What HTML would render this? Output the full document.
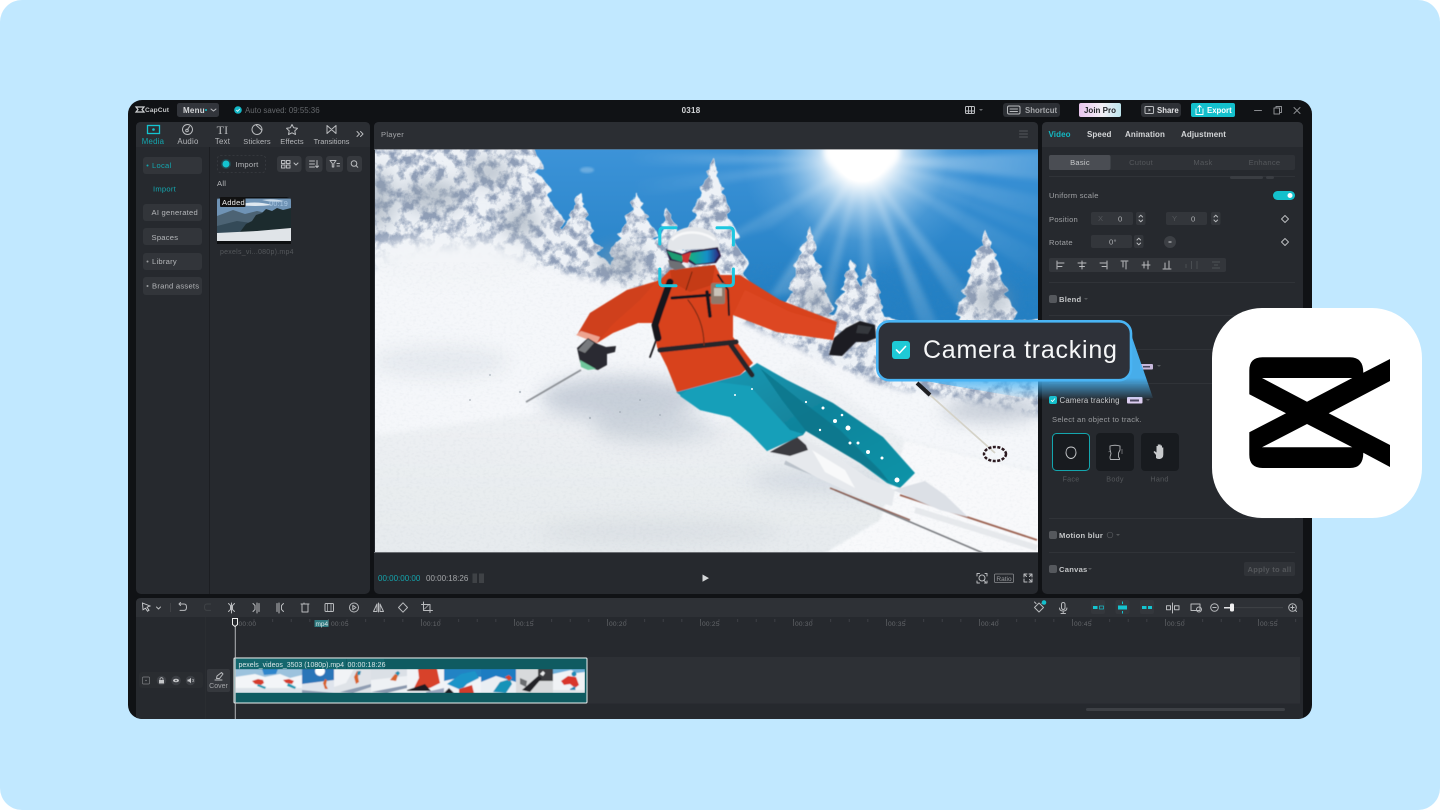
<!DOCTYPE html>
<html lang="en"><head><meta charset="utf-8"><title>CapCut Camera tracking</title>
<style>
html,body{margin:0;padding:0;background:#fff;width:1440px;height:810px;overflow:hidden}
svg{display:block}
text{font-family:"Liberation Sans",sans-serif;font-size:7.6px;fill:#b5b7ba;letter-spacing:.25px}
.b{font-weight:700;fill:#d5d7d9}
.g{fill:#6b6e72}
.d{fill:#54575b}
.c{fill:#14a6ae}
.m{text-anchor:middle}
.r{font-size:6.6px;fill:#64676b}
.i{fill:none;stroke:#b9bbbe;stroke-width:1;stroke-linecap:round;stroke-linejoin:round}
.in{fill:none;stroke:#14c4d0;stroke-width:1.3}
</style></head><body>
<svg width="1440" height="810" viewBox="0 0 1440 810" xmlns="http://www.w3.org/2000/svg">
<defs>
<clipPath id="vid"><rect x="375" y="149.500" width="663" height="402.500"/></clipPath>
<clipPath id="win"><rect x="128" y="100" width="1184" height="619" rx="14"/></clipPath>
<clipPath id="thumb"><path d="M217 244V201q0-4 4-4h66q4 0 4 4v43z"/></clipPath>
<clipPath id="clip"><rect x="235" y="669" width="350" height="24"/></clipPath>
<linearGradient id="sky" x1="0" y1="0" x2="0" y2="1"><stop offset="0" stop-color="#3c93d8"/><stop offset=".35" stop-color="#2480c4"/><stop offset="1" stop-color="#1d76ba"/></linearGradient>
<radialGradient id="sun" cx="862" cy="155" r="120" gradientUnits="userSpaceOnUse"><stop offset="0" stop-color="#fff"/><stop offset=".22" stop-color="#fff"/><stop offset=".42" stop-color="#e6f2fb" stop-opacity=".62"/><stop offset=".72" stop-color="#b8daf2" stop-opacity=".16"/><stop offset="1" stop-color="#9ccbec" stop-opacity="0"/></radialGradient>
<radialGradient id="raym" cx="862" cy="158" r="235" gradientUnits="userSpaceOnUse"><stop offset="0" stop-color="#fff"/><stop offset=".55" stop-color="#999"/><stop offset="1" stop-color="#000"/></radialGradient>
<mask id="rm" maskUnits="userSpaceOnUse" x="375" y="149" width="663" height="403"><rect x="375" y="149" width="663" height="403" fill="url(#raym)"/></mask>
<linearGradient id="fg" x1="0" y1="0" x2="0" y2="1"><stop offset="0" stop-color="#f2f4f7"/><stop offset=".55" stop-color="#e9edf0"/><stop offset="1" stop-color="#e5e9ec"/></linearGradient>
<linearGradient id="fan" gradientUnits="userSpaceOnUse" x1="0" y1="378" x2="0" y2="400"><stop offset="0" stop-color="#49b4f4" stop-opacity=".95"/><stop offset="1" stop-color="#49b4f4" stop-opacity="0"/></linearGradient>
<linearGradient id="pro" x1="0" y1="0" x2="1" y2="0"><stop offset="0" stop-color="#e9c6ee"/><stop offset=".55" stop-color="#f2eef5"/><stop offset="1" stop-color="#bfe6ee"/></linearGradient>
<linearGradient id="pant" x1="0" y1="0" x2="1" y2="1"><stop offset="0" stop-color="#1b9db8"/><stop offset=".5" stop-color="#11849c"/><stop offset="1" stop-color="#0f94a8"/></linearGradient>
<linearGradient id="lens" x1="0" y1="0" x2="1" y2="0"><stop offset="0" stop-color="#18b07c"/><stop offset=".6" stop-color="#1590c8"/><stop offset="1" stop-color="#2c2a80"/></linearGradient>
<filter id="tree" filterUnits="userSpaceOnUse" x="320" y="120" width="760" height="330" color-interpolation-filters="sRGB">
<feTurbulence type="fractalNoise" baseFrequency=".06" numOctaves="3" seed="4" result="n"/>
<feDisplacementMap in="SourceGraphic" in2="n" scale="9" xChannelSelector="R" yChannelSelector="G" result="d0"/>
<feGaussianBlur in="d0" stdDeviation=".6" result="d"/>
<feTurbulence type="fractalNoise" baseFrequency=".09" numOctaves="4" seed="9" result="n2"/>
<feColorMatrix in="n2" type="matrix" values="0 0 0 0 .56 0 0 0 0 .62 0 0 0 0 .72 3.6 0 0 0 -1.5" result="s"/>
<feComposite in="s" in2="d" operator="in" result="sh"/>
<feMerge><feMergeNode in="d"/><feMergeNode in="sh"/></feMerge>
</filter>
<filter id="grain" filterUnits="userSpaceOnUse" x="375" y="149" width="663" height="403" color-interpolation-filters="sRGB">
<feTurbulence type="fractalNoise" baseFrequency=".3 .45" numOctaves="2" seed="3"/>
<feColorMatrix type="matrix" values="0 0 0 0 .55 0 0 0 0 .6 0 0 0 0 .66 1.6 0 0 0 -.74"/>
<feComposite in2="SourceGraphic" operator="in"/>
</filter>
<filter id="b3" x="-20%" y="-20%" width="140%" height="140%"><feGaussianBlur stdDeviation="3"/></filter>
<filter id="b1"><feGaussianBlur stdDeviation="1"/></filter>
<filter id="b05" filterUnits="userSpaceOnUse" x="200" y="190" width="900" height="520"><feGaussianBlur stdDeviation=".5"/></filter>
<filter id="b8" x="-40%" y="-60%" width="180%" height="220%"><feGaussianBlur stdDeviation="9"/></filter>
<path id="t" d="M0 0L6 10L4 13L12 22L9 25L20 38L15 41L28 56L22 59L37 76L31 80L46 100H-46L-31 80L-37 75L-22 59L-28 55L-15 41L-20 37L-9 25L-12 21L-4 13L-6 9Z"/>
<pattern id="tk" patternUnits="userSpaceOnUse" x="235" y="619" width="18.6" height="10"><rect width=".8" height="3" fill="#42454a"/></pattern>
</defs>

<!-- page -->
<rect width="1440" height="810" rx="22" fill="#c1e8ff"/>

<!-- window -->
<rect x="128" y="100" width="1184" height="619" rx="14" fill="#101215"/>
<g clip-path="url(#win)">

<!-- top bar -->
<path d="M136 107h8l-2 2.500 2 2.500h-8l2-2.500z" fill="none" stroke="#d0d2d4" stroke-width="1.200"/>
<text x="145" y="112" style="font-size:6.600px;fill:#c4c6c8;font-weight:700;letter-spacing:.1px">CapCut</text>
<rect x="177" y="103" width="42" height="14" rx="2.500" fill="#32353b"/>
<text x="183" y="113" class="b" style="font-size:8px">Menu</text><circle cx="206" cy="110" r="1" fill="#14c4d0"/><path d="M211 109l2.500 2 2.500-2" class="i" stroke-width=".8"/>
<circle cx="238" cy="110" r="3.800" fill="#14b8c6"/><path d="M236.300 110l1.300 1.300 2.200-2.400" fill="none" stroke="#fff" stroke-width=".8"/>
<text x="245" y="113" style="fill:#65686c;font-size:7.900px;letter-spacing:0">Auto saved: 09:55:36</text>
<text x="691" y="113" class="b m" style="font-size:8px">0318</text>
<rect x="965.500" y="106.500" width="9" height="7" rx="1" class="i"/><path d="M968.500 107v6M971.500 107v6M966 111h8" class="i" stroke-width=".7"/><path d="M979 109l2 2 2-2z" fill="#6b6e72"/>
<rect x="1003" y="103" width="57" height="14" rx="3" fill="#2c2f34"/><rect x="1007.500" y="106" width="12.500" height="8" rx="1.500" class="i"/><path d="M1010 109h7.500M1010 111.500h7.500" class="i" stroke-width=".7"/>
<text x="1025" y="113" class="b" style="fill:#a5a7aa;font-size:7.800px;letter-spacing:0">Shortcut</text>
<rect x="1079" y="103" width="42" height="14" rx="2" fill="url(#pro)"/><text x="1100" y="113" class="b m" style="fill:#26282c;font-size:8px;letter-spacing:0">Join Pro</text>
<rect x="1141" y="103" width="40" height="14" rx="3" fill="#2e3136"/><rect x="1145" y="106.500" width="8.500" height="7" rx="1" class="i"/><path d="M1148.500 108.500v3l2.500-1.500z" fill="#b9bbbe"/>
<text x="1157" y="113" class="b" style="fill:#e2e3e5;font-size:7.800px;letter-spacing:0">Share</text>
<rect x="1191" y="103" width="44" height="14" rx="2" fill="#14c0cc"/><path d="M1196 108.500v6h7v-6M1199.500 112v-6.500M1197.500 107.500l2-2 2 2" fill="none" stroke="#fff" stroke-width=".9"/>
<text x="1207" y="113" class="b" style="fill:#fff;font-size:7.800px;letter-spacing:0">Export</text>
<path d="M1254.500 110.500h7" class="i" style="stroke:#8a8c90"/><rect x="1274" y="108" width="5.500" height="6" class="i" style="stroke:#8a8c90"/><path d="M1276 108v-1.500h5.500v6h-2" class="i" style="stroke:#8a8c90"/><path d="M1294 107.500l6 6M1300 107.500l-6 6" class="i" style="stroke:#8a8c90"/>

<!-- media panel -->
<rect x="136" y="122" width="234" height="472" rx="5" fill="#26292e"/>
<path d="M136 147v-20q0-5 5-5h224q5 0 5 5v20z" fill="#2b2e33"/>
<rect x="209" y="147" width="1" height="447" fill="#1c1e22"/>
<rect x="147.500" y="125.500" width="12" height="8" class="in"/><circle cx="153.500" cy="129.500" r="1.300" fill="#14c4d0"/>
<text x="153" y="144" class="m c" style="font-size:7.800px">Media</text>
<circle cx="187.500" cy="129.500" r="5" class="i"/><path d="M187.500 129.500l2-3" class="i"/><circle cx="187" cy="130.500" r="1.300" class="i"/>
<text x="188" y="144" class="m" style="font-size:7.800px">Audio</text>
<text x="222.500" y="134" class="m" style="font-family:'Liberation Serif',serif;font-size:12px;fill:#b9bbbe">TI</text>
<text x="222.500" y="144" class="m" style="font-size:7.800px">Text</text>
<circle cx="257" cy="129.500" r="5" class="i"/><path d="M256 125l5.500 5" class="i"/>
<text x="257" y="144" class="m" style="font-size:7.500px;letter-spacing:.1px">Stickers</text>
<path d="M292 124.500l1.700 3.300 3.800.5-2.700 2.600.7 3.600-3.500-1.700-3.500 1.700.7-3.600-2.700-2.600 3.800-.5z" class="i"/>
<text x="292" y="144" class="m" style="font-size:7.500px;letter-spacing:.1px">Effects</text>
<path d="M327 125.500v8l9-8v8z" class="i"/>
<text x="331.500" y="144" class="m" style="font-size:7.400px;letter-spacing:0">Transitions</text>
<path d="M357 131.500l2.500 2.500-2.500 2.500M360.500 131.500l2.500 2.500-2.500 2.500" class="i"/>

<rect x="143" y="157" width="59" height="17" rx="3" fill="#32353a"/><circle cx="147.500" cy="165.500" r="1" fill="#14a6ae"/><text x="152" y="168" class="c">Local</text>
<text x="153" y="191.500" class="c">Import</text>
<rect x="143" y="204" width="59" height="17" rx="3" fill="#32353a"/><text x="151.500" y="215">AI generated</text>
<rect x="143" y="228" width="59" height="17" rx="3" fill="#32353a"/><text x="151.500" y="240">Spaces</text>
<rect x="143" y="253" width="59" height="17" rx="3" fill="#32353a"/><circle cx="147.500" cy="261.500" r="1" fill="#9a9c9f"/><text x="152" y="264">Library</text>
<rect x="143" y="277" width="59" height="18" rx="3" fill="#32353a"/><circle cx="147.500" cy="286" r="1" fill="#9a9c9f"/><text x="152" y="288.500">Brand assets</text>

<rect x="217.500" y="155.500" width="48" height="17" rx="3" fill="none" stroke="#3a3d42" stroke-width=".8" stroke-dasharray="2 2"/>
<circle cx="226" cy="164" r="3.500" fill="#14c4d0"/><circle cx="226" cy="164" r="5" fill="#14c4d0" opacity=".2"/>
<text x="235.500" y="167">Import</text>
<rect x="277" y="156" width="24.500" height="16" rx="3" fill="#36393e"/><path d="M281.500 160.500h3.500v3h-3.500zM286.500 160.500h3.500v3h-3.500zM281.500 165h3.500v3h-3.500zM286.500 165h3.500v3h-3.500z" class="i" stroke-width=".8"/><path d="M294 163l2 2 2-2" class="i"/>
<rect x="305.500" y="156" width="17" height="16" rx="3" fill="#36393e"/><path d="M309.500 161h5M309.500 164h5M309.500 167h5M317 160.500v7M315.500 166l1.500 1.500 1.500-1.500" class="i" stroke-width=".8"/>
<rect x="326" y="156" width="17" height="16" rx="3" fill="#36393e"/><path d="M330 160.500h6l-2.200 3v3.500h-1.500v-3.500zM337 163.500h2.500M337 166h2.500" class="i" stroke-width=".8"/>
<rect x="347" y="156" width="15" height="16" rx="3" fill="#36393e"/><circle cx="354" cy="163.500" r="2.800" class="i"/><path d="M356 165.500l1.800 1.800" class="i"/>
<text x="217" y="186">All</text>
<!-- media thumb -->
<g clip-path="url(#thumb)">
<rect x="217" y="197" width="74" height="47" fill="#6f93b5"/>
<path d="M238 205q16-5 34 0-16 2-34 0z" fill="#dfe8f0"/><path d="M262 200q10-2 22 1-10 2-22-1z" fill="#c8d9e8"/>
<path d="M217 216l16-6 12 4 12-3 14 3 20-3v24h-74z" fill="#4c6374"/>
<path d="M217 226l20-5 14 2 16-2 24-3v15h-74z" fill="#344a58"/>
<path d="M240 232l6-8 6-3 4-6 6-2 4-4 6 2 5-3 6 2 8-2v23z" fill="#1c2b2e"/>
<path d="M217 233l40-2 34-3v13h-74z" fill="#e0e4e8"/>
<rect x="217" y="241" width="74" height="3" fill="#0e1012"/>
<rect x="217" y="197" width="74" height="1.500" fill="#0e1012"/>
</g>
<rect x="220" y="197" width="25.500" height="10" rx="1" fill="#111"/>
<text x="222" y="205" style="fill:#f0f0f0;font-size:7.500px">Added</text>
<text x="288" y="206" style="text-anchor:end;fill:#a9c7e2;font-size:7px">00:19</text>
<text x="220" y="254" class="d" style="font-size:7px">pexels_vi...080p).mp4</text>

<!-- player panel -->
<rect x="374" y="122" width="664" height="472" rx="5" fill="#26292e"/>
<path d="M374 149v-22q0-5 5-5h654q5 0 5 5v22z" fill="#2b2e33"/>
<text x="381" y="137" style="fill:#a3a5a8">Player</text>
<path d="M1019.500 131h8M1019.500 134h8M1019.500 137h8" class="i" style="stroke:#55585c"/>
<rect x="374" y="149" width="664" height="1" fill="#5a5d62"/><rect x="374" y="552" width="664" height="1" fill="#6a6d72"/>

<!-- ===== video ===== -->
<g clip-path="url(#vid)">
<rect x="375" y="149" width="663" height="403" fill="url(#sky)"/>
<!-- rays -->
<g mask="url(#rm)"><g fill="#fff" filter="url(#b3)">
<path d="M862 160L1060 200V226z" opacity=".2"/><path d="M862 160L1060 262V292z" opacity=".16"/>
<path d="M862 160L1015 350H985z" opacity=".3"/><path d="M862 160L945 340H925z" opacity=".36"/>
<path d="M862 160L880 330H860z" opacity=".2"/><path d="M862 160L830 310H815z" opacity=".26"/>
<path d="M862 160L790 295H770z" opacity=".3"/><path d="M862 160L720 250H700z" opacity=".22"/>
<path d="M862 160L770 228 745 235z" opacity=".16"/><path d="M862 160L620 200 610 182z" opacity=".18"/>
<path d="M862 160L600 150V166z" opacity=".26"/><path d="M862 160L1060 152V182z" opacity=".38"/>
<path d="M862 160L1060 232 1060 248z" opacity=".1"/><path d="M862 160L760 330H745z" opacity=".12"/>
</g></g>
<rect x="640" y="149" width="398" height="170" fill="url(#sun)"/>
<ellipse cx="862" cy="152" rx="38" ry="22" fill="#fff" filter="url(#b3)"/>
<ellipse cx="587" cy="170" rx="7" ry="3" fill="#fff" opacity=".25" filter="url(#b1)"/>
<!-- trees -->
<g fill="#eef2f7" filter="url(#tree)">
<path d="M330 125H528L541 168 535 172 552 190 546 194 566 222 560 226 576 246 586 262 604 284 640 310 330 320Z"/>
<use href="#t" transform="translate(579,193) scale(.85,1)"/>
<use href="#t" transform="translate(637,193) scale(1,1.1)"/>
<use href="#t" transform="translate(668,207) scale(.7,.9)"/>
<use href="#t" transform="translate(712,158) scale(1,1.4)"/>
<use href="#t" transform="translate(808,226) scale(.72,1.1)"/>
<use href="#t" transform="translate(852,258) scale(.62,.85)"/>
<use href="#t" transform="translate(869,264) scale(.5,.75)"/>
<use href="#t" transform="translate(986,230) scale(.85,1.1)"/>
<path d="M540 275L660 270 780 310V345H540Z"/>
<path d="M780 325L860 310 940 330 980 318 1060 322V420H780Z"/>
</g>
<!-- big tree shadows -->
<g fill="#8f9cab" filter="url(#b8)" opacity=".55">
<ellipse cx="432" cy="196" rx="30" ry="16"/><ellipse cx="378" cy="200" rx="16" ry="30"/><ellipse cx="488" cy="172" rx="22" ry="12"/><ellipse cx="520" cy="222" rx="18" ry="16"/><ellipse cx="620" cy="262" rx="24" ry="14"/>
<ellipse cx="815" cy="300" rx="16" ry="14"/><ellipse cx="990" cy="300" rx="20" ry="14"/>
</g>
<!-- snow -->
<path d="M340 272L470 258 520 262 604 283 700 300 780 340 880 385 1060 420V580H340Z" fill="#f5f7fa" filter="url(#b3)"/>
<ellipse cx="450" cy="262" rx="85" ry="24" fill="#f3f5f8" filter="url(#b8)"/>
<ellipse cx="992" cy="410" rx="50" ry="12" fill="#b2bcc9" filter="url(#b8)" opacity=".7"/>
<path d="M800 360L880 420 905 441 1060 478V580H340V440L560 410 700 440Z" fill="url(#fg)" filter="url(#b3)"/>
<path d="M905 441L1060 478V580H780L880 520Z" fill="#f8f9fb" filter="url(#b1)"/>
<g filter="url(#b8)">
<ellipse cx="620" cy="398" rx="80" ry="22" fill="#bdc6d2" opacity=".8"/>
<ellipse cx="655" cy="428" rx="62" ry="14" fill="#c2cad4" opacity=".7"/>
<ellipse cx="440" cy="362" rx="70" ry="16" fill="#d5dbe3" opacity=".45"/>
<ellipse cx="660" cy="532" rx="120" ry="14" fill="#d9dfe3" opacity=".8"/>
<ellipse cx="820" cy="480" rx="70" ry="14" fill="#c9d0da" opacity=".55"/>
</g>
<rect x="375" y="262" width="663" height="290" fill="#fff" filter="url(#grain)" opacity=".09"/>
<!-- back pole -->
<path d="M930 395L995 453" stroke="#d5d3c9" stroke-width="1.800"/>
<path d="M917 383L930 395" stroke="#1e1e22" stroke-width="4"/>
<ellipse cx="995" cy="454" rx="11" ry="7" fill="none" stroke="#2c1a20" stroke-width="2.500" stroke-dasharray="3 1.500"/>
<g filter="url(#b05)">
<!-- skis -->
<path d="M835 490L983 553" stroke="#7c7e82" stroke-width="1.600"/>
<path d="M900 495L1037 540" stroke="#9c6452" stroke-width="1.800"/>
<path d="M830 488L910 520" stroke="#8d5d50" stroke-width="1.300"/>
<path d="M915 510L1037 548" stroke="#e2e5e9" stroke-width="6" opacity=".8"/>
<path d="M785 462L880 498" stroke="#aab2bd" stroke-width="5" opacity=".7"/>
<!-- boots -->
<path d="M770 452L800 436 812 443 830 452 868 478 895 490 892 506 860 497 818 478Z" fill="#e6e9ed"/>
<path d="M770 452L797 437 806 445 808 450 790 456Z" fill="#3a3b40"/>
<path d="M812 450L845 470 855 488 825 472Z" fill="#f8f9fa"/>
<path d="M893 490L925 481 945 495 968 517 940 510Z" fill="#dce0e6"/>
<!-- pants -->
<path d="M676 392L740 375 757 363 787 380 833 403 883 437 915 473 900 488 887 483 860 463 806 431 803 435 767 451 750 433 730 417 700 410Z" fill="url(#pant)"/>
<path d="M700 380L750 386 790 430 803 434 767 451 750 433 730 417 700 410 680 396Z" fill="#149fb9"/>
<path d="M760 368L800 400 840 430 880 470 890 483 860 463 806 431 782 400Z" fill="#0c7388" opacity=".75"/>
<!-- jacket -->
<path d="M670 270L715 265 720 275 740 275 780 300 837 322 833 340 777 332 733 315 733 337 753 363 740 375 677 392 667 367 657 347 653 323 638 323 613 333 597 343 577 335 590 313 627 290 660 280Z" fill="#d8431f"/>
<path d="M590 313L627 290 655 283 640 300 612 325 597 343 577 335Z" fill="#cf401e"/>
<path d="M733 315L777 332 833 340 836 325 790 312 745 290Z" fill="#dd4721"/>
<path d="M670 270L715 265 712 285 690 292 672 282Z" fill="#c53a18"/>
<path d="M576 335L597 343 600 337 581 331Z" fill="#eda38f"/>
<!-- straps -->
<g fill="none" stroke="#17171b" stroke-linecap="round" stroke-linejoin="round">
<path d="M670 282L660 310 655 325 658 338" stroke-width="7"/>
<path d="M672 298L711 295" stroke-width="3"/>
<path d="M707 292L710 316" stroke-width="3.500"/>
<path d="M718 275L728 290 729 315" stroke-width="2"/>
<path d="M660 350L736 342" stroke-width="5" stroke="#26262a"/>
<path d="M731 345L752 375" stroke-width="5" stroke="#26262a" stroke-dasharray="3 1"/>
<path d="M657 338L650 357" stroke-width="1.800"/>
<path d="M688 300Q704 320 704 345" stroke-width="1.200" stroke="#7d2a12"/>
<path d="M692 272L686 290" stroke-width="1" stroke="#6a2410"/>
</g>
<rect x="711" y="283" width="14" height="21" rx="2" fill="#8f7a6c"/><rect x="714" y="288" width="8" height="8" fill="#c9c3b8"/>
<!-- gloves -->
<path d="M846 328L860 321 875 325 876 338 866 342 856 342 842 356 829 355 834 338Z" fill="#1b1c20"/>
<path d="M858 325L872 327 868 334 856 333Z" fill="#36373c"/>
<path d="M577 348L588 338 598 344 606 347 616 346 615 352 607 354 607 365 598 370 590 368 580 362Z" fill="#2b2c30"/>
<path d="M580 360L596 369 588 370 581 367Z" fill="#6fc79c"/>
<path d="M578 350L588 339 594 343 585 353Z" fill="#8c8e92" opacity=".8"/>
<path d="M581 370L526 402" stroke="#8d9196" stroke-width="1.800"/>
<!-- head -->
<path d="M668 252C666 236 678 227 694 227C710 227 720 237 720 250L700 249 680 250Z" fill="#e3e6ea"/>
<path d="M672 240C680 231 700 229 715 240" fill="none" stroke="#f7f8f9" stroke-width="2.500"/>
<path d="M666 249L682 254 690 251 718 247 721 256 716 263 695 265 685 260 680 265 670 262Z" fill="#2a1c44"/>
<path d="M667 251L683 256 682 262 672 259Z" fill="#1f9c72"/>
<path d="M682 255L691 252 688 263 683 262Z" fill="#cc3030"/>
<path d="M691 253L716 249 719 255 714 262 696 264 689 259Z" fill="url(#lens)"/>
<path d="M668 260L680 262 686 268 675 270 670 267Z" fill="#6e7074"/>
</g>
<!-- specks -->
<g fill="#fff">
<circle cx="823" cy="408" r="1.500"/><circle cx="835" cy="421" r="2"/><circle cx="848" cy="428" r="2.500"/><circle cx="842" cy="415" r="1.300"/><circle cx="858" cy="443" r="1.500"/><circle cx="868" cy="452" r="2"/><circle cx="882" cy="458" r="1.500"/><circle cx="897" cy="480" r="2.500"/><circle cx="820" cy="430" r="1.200"/><circle cx="806" cy="402" r="1.100"/><circle cx="850" cy="443" r="1.500"/><circle cx="752" cy="389" r="1"/><circle cx="735" cy="395" r="1"/>
</g>
<g fill="#9aa3ad" opacity=".6"><circle cx="640" cy="400" r="1"/><circle cx="590" cy="418" r="1.200"/><circle cx="660" cy="415" r="1"/><circle cx="620" cy="412" r="1"/><circle cx="470" cy="400" r="1"/><circle cx="520" cy="392" r="1.200"/><circle cx="490" cy="375" r="1"/></g>
<!-- brackets -->
<g fill="none" stroke="#1cc7e0" stroke-width="3" stroke-linecap="round">
<path d="M676 227.700H663.500Q659.800 227.700 659.800 231.500V244"/>
<path d="M717 227.700H729.500Q733.400 227.700 733.400 231.500V245"/>
<path d="M659.800 269V282Q659.800 285.800 663.500 285.800H676"/>
<path d="M733.400 269V282Q733.400 285.800 729.500 285.800H717"/>
</g>
</g>

<!-- player controls -->
<text x="378" y="581" class="c" style="font-size:8px;letter-spacing:0">00:00:00:00</text>
<text x="426" y="581" style="font-size:8px;fill:#a5a7aa;letter-spacing:0">00:00:18:26</text>
<path d="M472.500 573.500h4.500v9.500h-4.500zM479 573.500h5v9.500h-5z" fill="#3f4246"/>
<path d="M702.500 574.500l6.500 3.600-6.500 3.600z" fill="#d5d7d9"/>
<path d="M977 576v-2.500h2.500M985 573.500h2v2.500M987 581v2h-2.500M979.500 583H977v-2" class="i"/><circle cx="982" cy="578" r="3" class="i"/><path d="M984 580.500l1.500 1.500" class="i"/>
<rect x="994.500" y="574" width="19" height="8.500" rx="1" fill="none" stroke="#8a8c90" stroke-width=".8"/><text x="1004" y="581" class="m" style="font-size:6.500px;fill:#9a9c9f;letter-spacing:0">Ratio</text>
<path d="M1024 577v-3h3M1029 574h3v3M1032 579v3h-3M1027 582h-3v-3M1024.500 574.500l2 2M1031.500 574.500l-2 2M1031.500 581.500l-2-2" class="i"/>

<!-- right panel -->
<rect x="1042" y="122" width="261" height="472" rx="5" fill="#26292e"/>
<path d="M1042 147v-20q0-5 5-5h251q5 0 5 5v20z" fill="#2e3136"/>
<text x="1048.500" y="137" class="b" style="fill:#14b8c2;font-size:8px;letter-spacing:.1px">Video</text>
<text x="1087" y="137" class="b" style="font-size:8px;letter-spacing:.1px">Speed</text>
<text x="1125" y="137" class="b" style="font-size:8px;letter-spacing:.1px">Animation</text>
<text x="1181" y="137" class="b" style="font-size:8px;letter-spacing:.1px">Adjustment</text>
<rect x="1049" y="155" width="246" height="15" rx="2" fill="#2f3237"/>
<rect x="1049" y="155" width="61.500" height="15" rx="2" fill="#4a4d53"/>
<text x="1080" y="165" class="m" style="fill:#c8cacc">Basic</text>
<text x="1141" y="165" class="m d">Cutout</text><text x="1203" y="165" class="m d">Mask</text><text x="1264.500" y="165" class="m d">Enhance</text>
<g fill="#303338"><rect x="1049" y="176" width="246" height="1"/><rect x="1049" y="282" width="246" height="1"/><rect x="1049" y="315" width="246" height="1"/><rect x="1049" y="349" width="246" height="1"/><rect x="1049" y="383" width="246" height="1"/><rect x="1049" y="518" width="246" height="1"/><rect x="1049" y="552" width="246" height="1"/></g>
<rect x="1230" y="176" width="33" height="3" rx="1.500" fill="#3a3d42"/><rect x="1266" y="176" width="8" height="3" rx="1.500" fill="#3a3d42"/>
<text x="1049" y="198" style="fill:#a0a2a5">Uniform scale</text>
<rect x="1273" y="191" width="22" height="9" rx="4.500" fill="#14c0cc"/><circle cx="1290" cy="195.500" r="2.500" fill="#fff"/>
<text x="1049" y="222" style="fill:#a0a2a5">Position</text>
<rect x="1091" y="212" width="42" height="13" rx="2" fill="#33363b"/><text x="1098" y="221" class="d">X</text><text x="1118" y="221.500" style="fill:#b0b2b5">0</text>
<rect x="1136" y="212" width="9.500" height="13" rx="2" fill="#33363b"/><path d="M1139 217l1.800-1.800 1.800 1.800M1139 220l1.800 1.800 1.800-1.800" class="i" stroke-width=".7"/>
<rect x="1166" y="212" width="41" height="13" rx="2" fill="#33363b"/><text x="1172" y="221" class="d">Y</text><text x="1191" y="221.500" style="fill:#b0b2b5">0</text>
<rect x="1211" y="212" width="9.500" height="13" rx="2" fill="#33363b"/><path d="M1214 217l1.800-1.800 1.800 1.800M1214 220l1.800 1.800 1.800-1.800" class="i" stroke-width=".7"/>
<path d="M1285 215.500l3.500 3.500-3.500 3.500-3.500-3.500z" class="i" stroke-width=".8"/>
<text x="1049" y="245" style="fill:#a0a2a5">Rotate</text>
<rect x="1091" y="235" width="41" height="13" rx="2" fill="#33363b"/><text x="1109" y="244.500" style="fill:#b0b2b5">0°</text>
<rect x="1134" y="235" width="9.500" height="13" rx="2" fill="#33363b"/><path d="M1137 240l1.800-1.800 1.800 1.800M1137 243l1.800 1.800 1.800-1.800" class="i" stroke-width=".7"/>
<circle cx="1170" cy="242" r="6" fill="#3c3f44"/><path d="M1168.500 242h3" stroke="#d0d2d4" stroke-width="1"/>
<path d="M1285 238.500l3.500 3.500-3.500 3.500-3.500-3.500z" class="i" stroke-width=".8"/>
<rect x="1049" y="258" width="177" height="14" rx="2" fill="#33363b"/>
<g class="i" stroke-width=".9" fill="none">
<path d="M1057 261v8M1058 263h6M1058 266.500h4"/><path d="M1082 261v8M1078 263h8M1079.500 266.500h5"/><path d="M1107 261v8M1100 263h6M1102 266.500h4"/><path d="M1121 261h7M1123 262v5M1126 262v7"/><path d="M1142 265h8M1144 262v6M1148 261v8"/><path d="M1163 269h8M1165 263v5M1169 261v7"/>
</g>
<path d="M1186 264v4M1191.500 261v8M1197 261v8M1212 262h8M1212 268h8M1214 265h4" fill="none" stroke="#4e5155" stroke-width=".9"/>
<rect x="1049" y="295" width="8" height="8" rx="2" fill="#55585d"/><text x="1059" y="302" class="b" style="fill:#c4c6c8">Blend</text><path d="M1084 298l2 2 2-2z" fill="#54575b"/>
<rect x="1140" y="364" width="13" height="5.500" rx="1" fill="#d9c8ee" opacity=".9"/><rect x="1143" y="366" width="7" height="1.500" fill="#4c4860"/>
<path d="M1157 365l2 2 2-2z" fill="#54575b"/>

<!-- camera tracking section -->
<rect x="1049" y="396" width="8" height="8" rx="2" fill="#14c0cc"/><path d="M1051 400l1.500 1.500 2.500-3" fill="none" stroke="#fff" stroke-width=".8"/>
<text x="1059.500" y="403" style="fill:#c9cbcd;font-size:7.800px;letter-spacing:.2px">Camera tracking</text>
<rect x="1127" y="397" width="15.500" height="6.500" rx="1" fill="#dccdf0"/><rect x="1130" y="399.500" width="9" height="2" fill="#4c4860"/>
<path d="M1146 399l2 2 2-2z" fill="#54575b"/>
<text x="1052" y="422" style="fill:#9a9c9f">Select an object to track.</text>
<rect x="1052.500" y="433.500" width="37" height="37" rx="4" fill="#181b1f" stroke="#14a6ae" stroke-width="1"/>
<path d="M1071 447c-3.500 0-5 2.500-5 5.500 0 3.500 2.500 6 5 6s5-2.500 5-6c0-3-1.500-5.500-5-5.500z" fill="none" stroke="#c8cacc" stroke-width=".9"/>
<rect x="1096" y="433" width="38" height="38" rx="4" fill="#181b1f"/>
<path d="M1110 446q5-1.500 10 0v4l-1.500 3v4q1.500 1.500 1 2.500h-9q-.5-1-.5-2.500l1-3.500-1-4z" fill="none" stroke="#b0b2b5" stroke-width=".9"/><path d="M1110 451l-1.500 1M1122 449v5" fill="none" stroke="#8a8c90" stroke-width=".7"/>
<rect x="1141" y="433" width="38" height="38" rx="4" fill="#181b1f"/>
<path d="M1156 455l-2.500-3 1-1 2 1.500v-6.500h1.300v5v-6.500h1.400v6.500v-6.500h1.400v6.500v-5.500h1.400v6v-4h1.300v7q0 4-3.500 4.500-2.500 .3-3.800-1z" fill="#c8cacc"/>
<text x="1071" y="481.500" class="m d" style="font-size:7.200px">Face</text><text x="1115" y="481.500" class="m d" style="font-size:7.200px">Body</text><text x="1159.500" y="481.500" class="m d" style="font-size:7.200px">Hand</text>
<rect x="1049" y="531" width="8" height="8" rx="2" fill="#55585d"/><text x="1059" y="538" class="b" style="fill:#c4c6c8">Motion blur</text><circle cx="1110" cy="535" r="2.800" fill="none" stroke="#54575b" stroke-width=".7"/><path d="M1116 534l2 2 2-2z" fill="#54575b"/>
<rect x="1049" y="565" width="8" height="8" rx="2" fill="#55585d"/><text x="1059" y="572" class="b" style="fill:#c4c6c8">Canvas</text><path d="M1088 568l2 2 2-2z" fill="#54575b"/>
<rect x="1244" y="562" width="51" height="14" rx="2" fill="#303338"/><text x="1269.500" y="572" class="m b" style="fill:#54575b">Apply to all</text>

<!-- timeline -->
<path d="M136 719V603q0-5 5-5h1157q5 0 5 5v116z" fill="#26292e"/>
<path d="M136 617v-14q0-5 5-5h1157q5 0 5 5v14z" fill="#2e3136"/>
<path d="M142.500 603l7.500 3-3 1.200 2 3-1.500 1-2-3-2.500 1.500z" fill="none" stroke="#d0d2d4" stroke-width=".9"/><path d="M156.500 607l2 2 2-2" class="i" stroke-width=".7"/><rect x="170" y="603" width=".8" height="9" fill="#44474b"/>
<path d="M179 604h5q2.500 0 2.500 3.200t-2.500 3.200h-4M180.500 602.500l-1.500 1.500 1.500 1.500" class="i"/>
<path d="M211 604h-4q-2.500 0-2.500 3.200t2.500 3.200h4" fill="none" stroke="#3f4246"/>
<g class="i"><path d="M228.500 603.500l2 2v4l-2 2M234.500 603.500l-2 2v4l2 2M231.500 603v10"/><path d="M253 603.500l2 2v4l-2 2M259 603.500v8M257 603v10"/><path d="M277 603.500v8M283.500 603.500l-2 2v4l2 2M279 603v10"/><path d="M301 604h8M302 604v8h6v-8M304 603v1"/><rect x="325" y="603.500" width="8.500" height="8" rx="1"/><path d="M327.500 603.500v8M331 603.500v8" stroke-width=".7"/><circle cx="354" cy="607.500" r="4.500"/><path d="M352.800 605.300l3.200 2.200-3.200 2.200z"/><path d="M378.500 603v9M377 604l-3.500 7.500h3.500zM380 604l3.500 7.500H380z"/><path d="M403 602.800l4.500 4.700-4.500 4.700-4.500-4.700z"/><path d="M423.500 602v8.500h9M421.500 604.500h8.500v8" /><path d="M424.500 609l4-4" stroke-width=".7"/></g>
<!-- right toolbar -->
<path d="M1039 603l4.500 4.500-4.500 4.500-4.500-4.500z" class="i"/><path d="M1036 603.500l-1.500-1.500M1042 603.500l1.500-1.500" class="i" stroke-width=".7"/><circle cx="1044" cy="602.500" r="2.300" fill="#14c0cc"/>
<rect x="1061.500" y="602.500" width="3.500" height="7" rx="1.700" class="i"/><path d="M1059.500 608q0 3 3.700 3t3.700-3M1063.200 611v2.500M1061 613.500h4.500" class="i" stroke-width=".7"/>
<rect x="1091" y="600" width="14" height="14" rx="2" fill="#34373c"/><rect x="1115.500" y="600" width="14" height="14" rx="2" fill="#34373c"/><rect x="1140" y="600" width="14" height="14" rx="2" fill="#34373c"/>
<g fill="#14c4d0"><rect x="1093" y="606" width="4.500" height="3"/><rect x="1099.500" y="606" width="4" height="3" fill="none" stroke="#14c4d0" stroke-width=".7"/><rect x="1118" y="605.500" width="9" height="4"/><rect x="1122" y="601.500" width="1" height="2.500"/><rect x="1122" y="611" width="1" height="2.500"/><rect x="1142" y="606" width="4.500" height="3"/><rect x="1148" y="606" width="4" height="3"/></g>
<path d="M1172.500 603v10M1166.500 605.800h4v4h-4zM1174.500 605.800h4.500v4h-4.500z" class="i" stroke-width=".8"/>
<rect x="1191" y="604" width="9" height="6.500" class="i" stroke-width=".8"/><circle cx="1199" cy="609.500" r="2.500" class="i" stroke-width=".8"/>
<circle cx="1214.500" cy="607.500" r="3.800" class="i"/><path d="M1212.800 607.500h3.400" class="i"/>
<rect x="1224" y="607" width="6" height="1.500" fill="#e3e4e6"/><rect x="1230" y="603.500" width="4" height="8" rx="1.500" fill="#f0f0f0"/><rect x="1234" y="607.300" width="49" height=".8" fill="#44474b"/>
<circle cx="1292.500" cy="607.500" r="3.800" class="i"/><path d="M1290.800 607.500h3.400M1292.500 605.800v3.400" class="i"/><path d="M1295.500 610.500l1 1" class="i"/>
<!-- ruler -->
<rect x="235" y="619" width="1066" height="3" fill="url(#tk)"/>
<g fill="#55585c"><rect x="328" y="619" width=".8" height="7"/><rect x="421" y="619" width=".8" height="7"/><rect x="514" y="619" width=".8" height="7"/><rect x="607" y="619" width=".8" height="7"/><rect x="700" y="619" width=".8" height="7"/><rect x="793" y="619" width=".8" height="7"/><rect x="886" y="619" width=".8" height="7"/><rect x="979" y="619" width=".8" height="7"/><rect x="1072" y="619" width=".8" height="7"/><rect x="1165" y="619" width=".8" height="7"/><rect x="1258" y="619" width=".8" height="7"/></g>
<text x="238.500" y="626" class="r">00:00</text><text x="331" y="626" class="r">00:05</text><text x="423" y="626" class="r">00:10</text><text x="516" y="626" class="r">00:15</text><text x="609" y="626" class="r">00:20</text><text x="702" y="626" class="r">00:25</text><text x="795" y="626" class="r">00:30</text><text x="888" y="626" class="r">00:35</text><text x="981" y="626" class="r">00:40</text><text x="1074" y="626" class="r">00:45</text><text x="1167" y="626" class="r">00:50</text><text x="1260" y="626" class="r">00:55</text>
<rect x="314.500" y="620" width="14" height="7" fill="#2f7a80"/><text x="315.500" y="626" style="font-size:6.500px;fill:#d8e4e5;letter-spacing:0">mp4</text>
<!-- track -->
<rect x="233" y="657" width="1067" height="46.500" fill="#2d3035"/>
<rect x="205" y="617" width="1" height="102" fill="#2a2d31"/>
<rect x="139" y="672" width="64" height="16" rx="3" fill="#2a2d31"/>
<g><rect x="142.500" y="677" width="7" height="7" rx="1" fill="none" stroke="#7f8185" stroke-width=".7"/><circle cx="146" cy="680.500" r=".6" fill="#9a9c9f"/>
<circle cx="161.500" cy="680.500" r="4.800" fill="#3c3f44"/><rect x="159" y="680" width="5" height="3.500" fill="#c4c6c8"/><path d="M160 680v-1.500q1.500-1.800 3 0v1.500" fill="none" stroke="#c4c6c8" stroke-width=".7"/>
<circle cx="176" cy="680.500" r="4.800" fill="#3c3f44"/><ellipse cx="176" cy="680.500" rx="3" ry="1.800" fill="#c4c6c8"/><circle cx="176" cy="680.500" r=".8" fill="#3c3f44"/>
<circle cx="190.500" cy="680.500" r="4.800" fill="#3c3f44"/><path d="M187.500 679.500h1.500l2-1.700v5.400l-2-1.700h-1.500z" fill="#c4c6c8"/><path d="M192.500 679l1.500 3M194 679l-1.500 3" stroke="#c4c6c8" stroke-width=".5"/></g>
<rect x="207" y="669" width="23" height="23" rx="2" fill="#35383d"/><path d="M216.500 678.500l.5-2.500 4.500-3.500 1.500 1.500-3.500 4.500zM215 680h7" class="i" stroke-width=".8"/><text x="218.500" y="688" class="m" style="font-size:7px;fill:#a3a5a8;letter-spacing:0">Cover</text>
<!-- clip -->
<rect x="234" y="658" width="353" height="45" rx="1" fill="#0f5b61" stroke="#eef3f3" stroke-width="1"/>
<rect x="235" y="659" width="111" height="10" fill="#13666d"/><rect x="347" y="659" width="37" height="10" fill="#13666d"/>
<text x="238.500" y="667" style="fill:#d9e6e7;font-size:7px;letter-spacing:0">pexels_videos_3503 (1080p).mp4</text><text x="347.500" y="667" style="fill:#d9e6e7;font-size:7px;letter-spacing:.1px">00:00:18:26</text>
<g clip-path="url(#clip)"><g filter="url(#b05)">
<rect x="235" y="669" width="67" height="24" fill="#f3f5f8"/><path d="M235 669h67v6l-12 3-10-4-15 3-10-3-20 3z" fill="#9cc2dd"/><path d="M262 669h16l-2 5-12 1z" fill="#2d86cc"/><path d="M235 688h67v5h-67z" fill="#dde3e9"/>
<path d="M252 681l6-2 5 1 1 3-3 2-6-1z" fill="#d63a2a"/><path d="M258 684l8 3-1 2-8-3z" fill="#1d9ab2"/>
<path d="M283 680l6-1 5 2-2 3-6-1z" fill="#d63a2a"/><path d="M288 683l8 4-1 2-8-3z" fill="#1d9ab2"/>
<rect x="302" y="669" width="32" height="24" fill="#2a74b8"/><circle cx="320" cy="671" r="5" fill="#fff"/><path d="M302 684l32-4v13h-32z" fill="#dfe4ec"/><path d="M323 683l2-4 2 1-1 5 2 4h-3z" fill="#d8632a"/><path d="M302 690l32 3h-32z" fill="#8d9bb0"/>
<rect x="334" y="669" width="37" height="24" fill="#dfe3e8"/><path d="M334 669h20l-8 14-12 4z" fill="#f1f3f6"/><path d="M354 677l3-6 2 1-1 5 1 5-3 2z" fill="#d8632a"/><path d="M358 671l3 0-1 4h-3z" fill="#1d8fb0"/><path d="M340 692l31-8v3l-18 6z" fill="#8f9db2"/>
<rect x="371" y="669" width="36" height="24" fill="#eef1f4"/><path d="M371 669h36v7l-36 4z" fill="#dbe0e6"/><path d="M390 680l5-6 3 1-2 6z" fill="#d8632a"/><path d="M395 673l3-2 2 2-2 3z" fill="#1d8fb0"/><path d="M371 692l36-7v3l-20 5z" fill="#8a98ae"/>
<rect x="407" y="669" width="37" height="24" fill="#f1f3f6"/><path d="M418 669h19l3 14-10 5-16 0 5-10z" fill="#d8432a"/><path d="M407 690l18-6 6 7h-24z" fill="#1d1f24"/><path d="M426 692l18-4v5h-18z" fill="#9aa4bc"/>
<rect x="444" y="669" width="37" height="24" fill="#f0f3f7"/><path d="M444 669h37v8l-18 0-19 4z" fill="#2083c4"/><path d="M447 684l14-10 14-3 4 7-12 6-6 6z" fill="#1a94c8"/><path d="M459 689l13-4 2 8h-15z" fill="#d23a2a"/><path d="M444 693l5-5 5 5z" fill="#1e1e22"/>
<rect x="481" y="669" width="35" height="24" fill="#1c7cc2"/><path d="M481 682l15-6 20 6v11h-35z" fill="#e9eef3"/><path d="M493 692l7-10 10-3 2 5-6 9z" fill="#1593b8"/><path d="M505 677l4-2 3 3-3 3z" fill="#d8432a"/>
<rect x="516" y="669" width="37" height="24" fill="#d8dadc"/><rect x="538" y="669" width="15" height="12" fill="#3c3d40"/><path d="M522 690l16-14 4 2-12 14z" fill="#222326"/><path d="M520 678l7 3-1 6-6-3z" fill="#6b6d70"/><path d="M540 674l3-3 2 2-2 3z" fill="#eee"/>
<rect x="553" y="669" width="32" height="24" fill="#f0f2f5"/><path d="M553 669h32v3l-8 1-6-3-18 4z" fill="#6aaed8"/><path d="M561 681l7-5 8 1 3 8-4 3-5-4-6 1z" fill="#d8342a"/><path d="M570 689l5-3 1 7h-6z" fill="#1a86b4"/><circle cx="574" cy="674" r="2.500" fill="#1b8bb8"/><rect x="553" y="690" width="32" height="3" fill="#e2e6ea"/>
</g></g>
<!-- playhead -->
<rect x="234.800" y="619" width=".9" height="100" fill="#c4c6c8"/>
<path d="M232.500 618.500h5v6l-2.500 2-2.500-2z" fill="#26292e" stroke="#f0f0f0" stroke-width="1"/>
<rect x="1086" y="708" width="199" height="3" rx="1.500" fill="#3d4045"/>
</g>

<!-- callout -->
<path d="M925 381L1132 337 1153 398 1048 402Z" fill="url(#fan)"/>
<rect x="877.300" y="321.300" width="253.700" height="58.900" rx="12" fill="#2e3139" stroke="#49b4f4" stroke-width="2.600"/>
<rect x="892" y="341" width="18" height="18" rx="3" fill="#1ecad6"/>
<path d="M896.500 350l3 3 6-6.500" fill="none" stroke="#fff" stroke-width="1.600" stroke-linecap="round" stroke-linejoin="round"/>
<text x="923" y="358" style="font-size:25px;fill:#f6f7f8;letter-spacing:.75px">Camera tracking</text>

<!-- logo -->
<rect x="1212" y="308" width="210" height="210" rx="50" fill="#fff"/>
<path fill-rule="evenodd" d="M1262.500 357.300H1350Q1363.300 357.300 1363.300 372.700L1390 359V381L1328.700 413.300 1390 445V467L1363.300 452.700Q1363.300 468 1350 468H1262.500Q1249.300 468 1249.300 454.800V432.300L1286 413.300 1249.300 394.300V370.500Q1249.300 357.300 1262.500 357.300ZM1262 378L1307 401.700 1352.300 378ZM1262 447.300L1307 424 1352.300 447.300Z" fill="#000"/>
</svg>
</body></html>
